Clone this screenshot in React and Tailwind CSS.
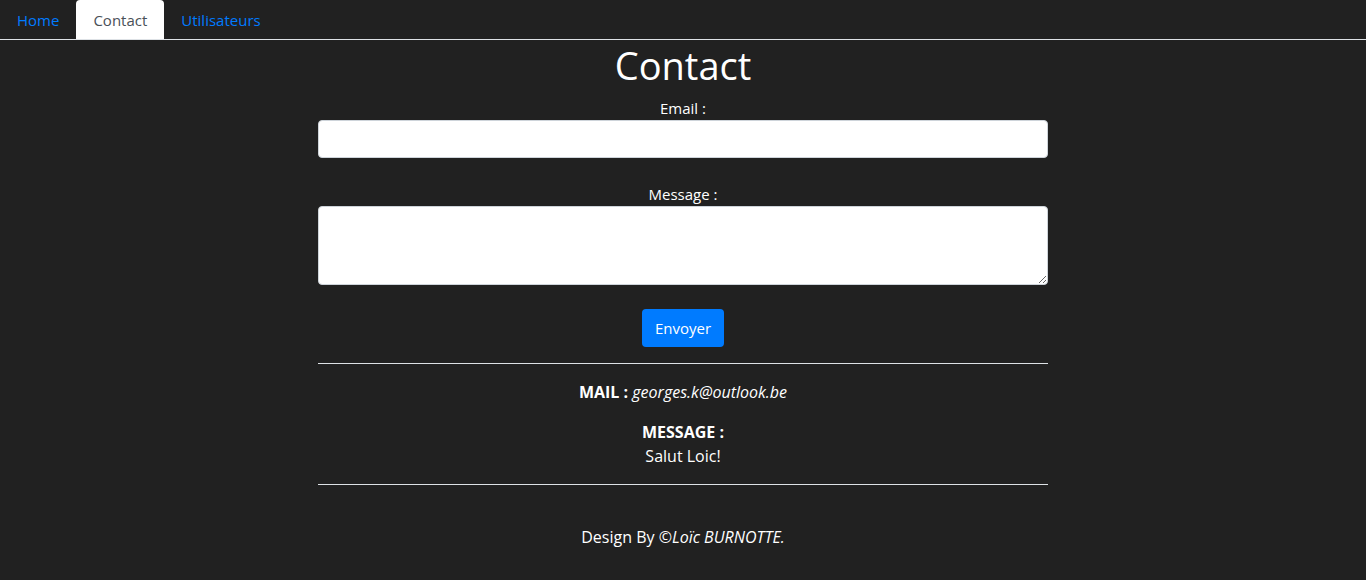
export default function App() {
  return (
    <div className="min-h-[580px] bg-[#212121] text-white text-base" style={{ fontFamily: '"Open Sans", "Noto Sans", sans-serif' }}>
      <nav className="flex h-10 border-b border-[#dee2e6]">
        <a className="px-[17px] leading-10 text-[#007bff] text-[15px]">Home</a>
        <a className="px-[17px] leading-10 text-[#495057] bg-white text-[15px] rounded-t">Contact</a>
        <a className="px-[17px] leading-10 text-[#007bff] text-[15px]">Utilisateurs</a>
      </nav>
      <div className="w-[730px] mx-auto flex flex-col items-center">
        <h1 className="text-[38px] leading-[48px] mb-2 mt-[1px]">Contact</h1>
        <label className="leading-6 text-[15px] -mt-[1px]">Email :</label>
        <input className="w-full h-[38px] bg-white border border-[#ced4da] rounded" />
        <label className="leading-6 mt-6 text-[15px]">Message :</label>
        <textarea className="w-full h-[79px] bg-white border border-[#ced4da] rounded block" />
        <button className="mt-6 h-[38px] px-[13px] bg-[#007bff] rounded text-white text-[15px]">Envoyer</button>
        <hr className="w-full mt-4 border-t border-[#dee2e6]" />
        <p className="mt-4 leading-6 text-base"><b>MAIL :</b> <i>georges.k@outlook.be</i></p>
        <p className="mt-4 leading-6 text-base font-bold">MESSAGE :</p>
        <p className="leading-6 text-base">Salut Loic!</p>
        <hr className="w-full mt-4 border-t border-[#dee2e6]" />
        <p className="mt-10 leading-6 text-base">Design By ©<i>Loïc BURNOTTE.</i></p>
      </div>
    </div>
  );
}
